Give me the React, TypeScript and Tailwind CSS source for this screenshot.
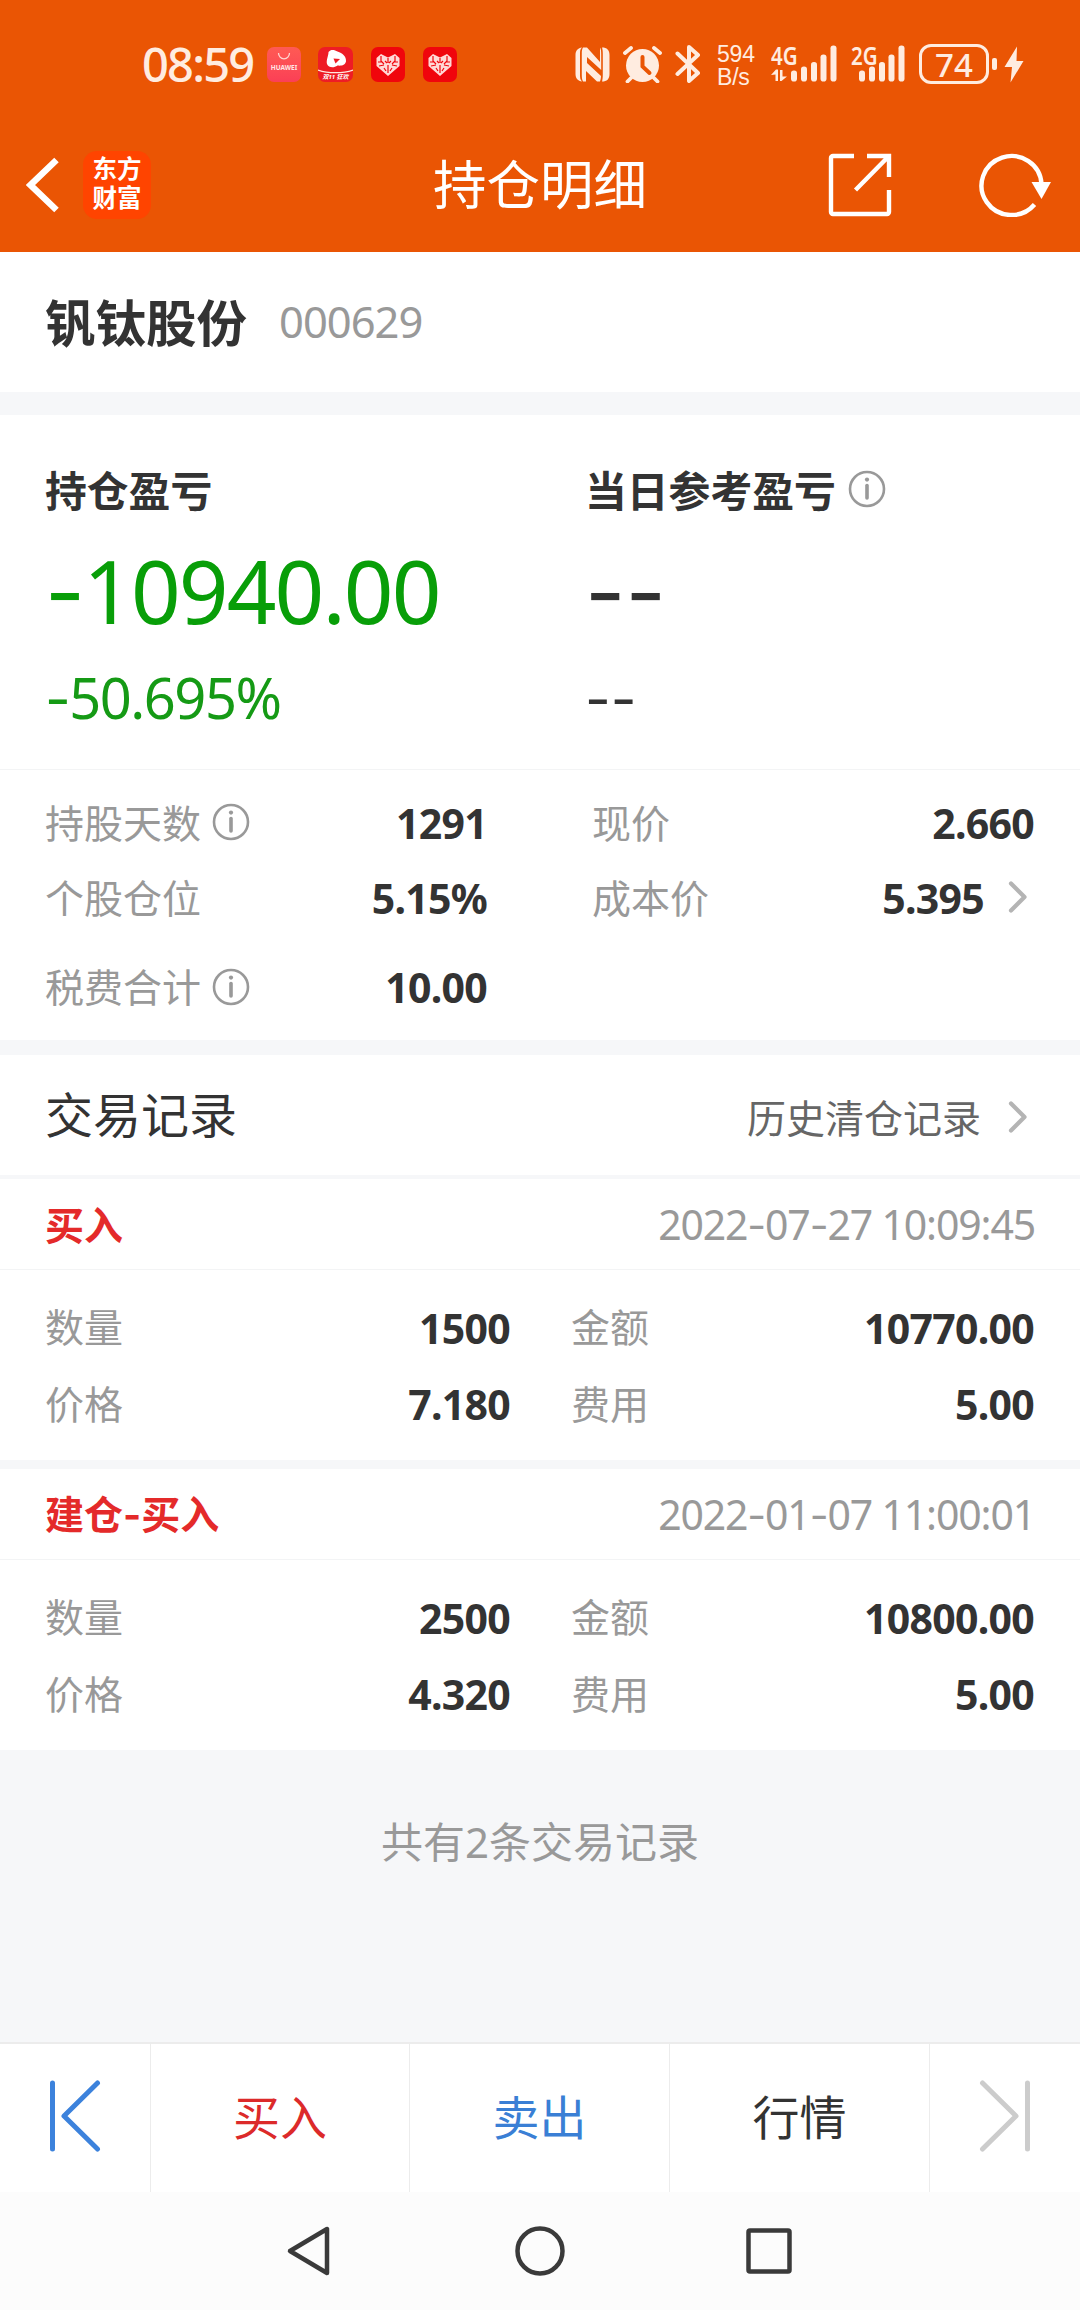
import React from 'react';

// Type definitions
interface TradeRecord {
  kind: string;
  time: string;
  quantity: string;
  amount: string;
  price: string;
  fee: string;
}

// Sample data
const records: TradeRecord[] = [
  {
    kind: '买入',
    time: '2022-07-27 10:09:45',
    quantity: '1500',
    amount: '10770.00',
    price: '7.180',
    fee: '5.00',
  },
  {
    kind: '建仓-买入',
    time: '2022-01-07 11:00:01',
    quantity: '2500',
    amount: '10800.00',
    price: '4.320',
    fee: '5.00',
  },
];

// Text with the wide hyphen of Inter in place of the short default one
const Dashed: React.FC<{ text: string }> = ({ text }) => (
  <>
    {text.split(/(-)/).map((part, i) =>
      part === '-' ? (
        <span key={i} className="font-['Inter']">-</span>
      ) : (
        <React.Fragment key={i}>{part}</React.Fragment>
      )
    )}
  </>
);

const InfoIcon: React.FC = () => (
  <svg className="h-[38px] w-[38px]" viewBox="0 0 38 38" fill="none">
    <circle cx="19" cy="19" r="17" stroke="#999999" strokeWidth="2.6" />
    <circle cx="19" cy="9.6" r="2.1" fill="#999999" />
    <path d="M19 15.5V28" stroke="#999999" strokeWidth="3.6" strokeLinecap="round" />
  </svg>
);

const Chevron: React.FC = () => (
  <svg className="h-8 w-5" viewBox="0 0 20 32" fill="none">
    <path d="M3 2.5L16.5 16L3 29.5" stroke="#b4b4b4" strokeWidth="4.2" strokeLinecap="round" strokeLinejoin="round" />
  </svg>
);

const Signal: React.FC<{ label: string; data?: boolean }> = ({ label, data }) => (
  <div className="relative h-[38px] w-[68px]">
    <span className="absolute -top-[1px] left-0 origin-left scale-x-[0.82] text-[25px] leading-[22px] font-semibold">{label}</span>
    <svg className="h-[38px] w-[68px]" viewBox="0 0 68 38" fill="currentColor">
      {data && <path d="M0 30l5-5.5h2V36H4.500V29.500zM9 25h2.500v6.500H16L10.500 36H9z" />}
      <rect x={data ? 20 : 8} y="25.500" width="6" height="11" rx="2.800" />
      <rect x={data ? 30 : 18} y="21.500" width="6" height="15" rx="2.800" />
      <rect x={data ? 40 : 28} y="17" width="6" height="19.500" rx="2.800" />
      <rect x={data ? 49.500 : 37.500} y="9.500" width="6" height="27" rx="2.800" />
      <rect x={data ? 59.500 : 47.500} y="0.500" width="6" height="36" rx="2.800" />
    </svg>
  </div>
);

// Heart shaped shopping logo
const HeartApp: React.FC = () => (
  <svg className="h-[35px] w-[34px]" viewBox="0 0 34 35">
    <rect width="34" height="35" rx="7" fill="#f0050c" />
    <path d="M5.500 11L10 7l7 3.500L24 7l4.500 4v8L17 29 5.500 19z" fill="#ffd9d6" />
    <path
      d="M17 11v5M10 9v5l3 3M24 9v5l-3 3M7 15h4M27 15h-4M8 19l5-1M26 19l-5-1M17 18v8M13 21l2 3M21 21l-2 3M14 14l2 2M20 14l-2 2"
      stroke="#f0050c"
      strokeWidth="1.200"
      fill="none"
    />
  </svg>
);

const StatusBar: React.FC = () => (
  <div className="flex h-[120px] items-center pt-2 text-[#ffece0]">
    <span className="ml-[142px] w-[125px] text-[47px] leading-none font-medium tracking-[-1.8px]">08:59</span>
    <div className="flex h-[35px] w-[34px] flex-col items-center rounded-[7px] bg-gradient-to-b from-[#ff5a54] to-[#fb3f56]">
      <svg className="mt-[5px] h-[9px] w-3.5" viewBox="0 0 14 9" fill="none">
        <path d="M1.500 1a5.500 5.800 0 0 0 11 0" stroke="#ffd5d0" strokeWidth="1.300" />
      </svg>
      <span className="mt-1 text-[6.500px] leading-none font-bold text-[#ffe6e4]">HUAWEI</span>
    </div>
    <div className="ml-[17px] flex h-[35px] w-[35px] flex-col items-center overflow-hidden rounded-[7px] bg-[#ee1c25]">
      <svg className="h-[27px] w-[35px] shrink-0" viewBox="0 0 35 27">
        <path d="M10.500 5c2-3 6-2.500 9-.5 5 1.500 9 5 8.500 10-1 4-5 4.500-8.500 4-4 3-9 2-10.500-1.500-1-4 1.500-8 1.500-12z" fill="#fff" />
        <path d="M15.500 11.500l6.500 .5-4.500 4.500z" fill="#ee1c25" />
        <path d="M0 23c10 3.500 25 3.500 35 0" stroke="#ffe8e0" strokeWidth="1.300" fill="none" />
      </svg>
      <span className="text-[6px] leading-[7px] font-bold text-white italic">双11 狂欢</span>
    </div>
    <div className="ml-[18px] flex gap-[18px]">
      <HeartApp />
      <HeartApp />
    </div>
    <div className="ml-[118px] flex items-center">
      <svg className="h-[35px] w-[35px]" viewBox="0 0 35 35">
        <path d="M7 .5C5 2 5 4 5 7v20.500c0 3 0 5 2 7C3 34 .5 31.500 .5 27V8C.5 3.500 3 1 7 .5zM27 .5c5 0 7.500 2.500 7.500 7.500v19c0 5-2.500 7.500-7.500 7.500.5-1.500.8-4 .8-7V7c0-3-.3-5-.8-6.500zM8 .5h4L25 15V.5c1 1.500 1.200 3.500 1.200 6.500v16L12 10v6l14 13c0 2-.5 4-1 5.500h-3L11 24v10.500H8c-1-2-1.200-4-1.200-7V7c0-3 .2-5 1.200-6.500z" fill="currentColor" />
      </svg>
      <svg className="ml-[13px] h-[37px] w-[39px]" viewBox="0 0 39 37" fill="none">
        <circle cx="19.500" cy="19.500" r="16.500" fill="currentColor" />
        <path d="M2 7l6-5M37 7l-6-5M8 32l-3.500 3.500M31 32l3.500 3.500" stroke="currentColor" strokeWidth="3.800" strokeLinecap="round" />
        <path d="M19.500 11v9.500l7 6.500" stroke="#ea5504" strokeWidth="4" strokeLinecap="round" />
      </svg>
      <svg className="ml-[13px] h-[38px] w-[26px]" viewBox="0 0 26 38" fill="none">
        <path d="M2.500 8.500L23 28l-9 8V2l9 8L2.500 29" stroke="currentColor" strokeWidth="4" strokeLinecap="round" strokeLinejoin="round" />
      </svg>
      <div className="mt-[3px] ml-4 w-[54px] font-['Liberation_Sans'] text-[23px] leading-[23px] tracking-[-0.200px]">
        594
        <br />
        B/s
      </div>
      <Signal label="4G" data />
      <div className="ml-3">
        <Signal label="2G" />
      </div>
      <div className="flex h-10 w-[70px] items-center justify-center rounded-[12px] border-[3px] border-current text-[33px] leading-none font-medium">
        74
      </div>
      <span className="ml-[3px] h-3 w-[5px] rounded-[2px] bg-current" />
      <svg className="ml-[7px] h-[37px] w-5" viewBox="0 0 20 37" fill="currentColor">
        <path d="M13 0.500L0.500 21H8L6.500 36.500L19.500 15H12.500z" />
      </svg>
    </div>
  </div>
);

const TitleBar: React.FC = () => (
  <div className="grid h-[132px] grid-cols-[380px_1fr_380px] items-center pb-[3px] text-white">
    <div className="flex items-center pl-[26px]">
      <svg className="h-14 w-[34px]" viewBox="0 0 34 56" fill="none">
        <path d="M30.500 3L4.500 28l26 25" stroke="currentColor" strokeWidth="6.500" />
      </svg>
      <div className="ml-[23px] flex h-[68px] w-[68px] flex-col items-center justify-center rounded-[14px] bg-[#ff4400] pb-[3px] text-[24.500px] leading-[29px] font-bold">
        <span>东方</span>
        <span>财富</span>
      </div>
    </div>
    <h1 className="pt-px text-center text-[53.500px] leading-none">持仓明细</h1>
    <div className="flex items-center justify-end pr-[28px]">
      <svg className="h-16 w-16" viewBox="0 0 64 64" fill="none" stroke="currentColor" strokeWidth="4.400">
        <path d="M26 3H5a2 2 0 0 0-2 2v54a2 2 0 0 0 2 2h54a2 2 0 0 0 2-2V37M39 3h22v21M60 4L27.500 37" />
      </svg>
      <svg className="ml-[87px] h-16 w-[73px]" viewBox="0 0 73 64" fill="none">
        <path d="M55.500 51.500A30 29.500 0 1 1 62.500 31" stroke="currentColor" strokeWidth="4.400" />
        <path d="M52.500 29h19.500L62.500 46z" fill="currentColor" />
      </svg>
    </div>
  </div>
);

const RecordCard: React.FC<{ record: TradeRecord }> = ({ record }) => {
  const cells = [
    ['数量', record.quantity, '金额', record.amount],
    ['价格', record.price, '费用', record.fee],
  ];

  return (
    <div className="bg-white">
      <div className="flex h-[91px] items-center justify-between border-b border-[#f3f4f5] pr-[45px] pl-[45px]">
        <span className="text-[39px] leading-none font-bold text-[#e42a2a]">
          <Dashed text={record.kind} />
        </span>
        <span className="pt-[2px] text-[41px] leading-none tracking-[-1.150px] text-[#999999]">
          <Dashed text={record.time} />
        </span>
      </div>
      <div className="pt-5 pb-[17px]">
        {cells.map(([labelA, valueA, labelB, valueB]) => (
          <div key={labelA} className="grid h-[76.500px] grid-cols-[465px_463px] items-center gap-[61px] pl-[45px] text-[39px] leading-none">
            <div className="flex items-center justify-between">
              <span className="pb-[3px] text-[#999999]">{labelA}</span>
              <span className="text-[41px] font-bold tracking-[-0.700px] text-[#333333]">{valueA}</span>
            </div>
            <div className="flex items-center justify-between">
              <span className="pb-[3px] text-[#999999]">{labelB}</span>
              <span className="text-[41px] font-bold tracking-[-0.700px] text-[#333333]">{valueB}</span>
            </div>
          </div>
        ))}
      </div>
    </div>
  );
};

const PositionDetail: React.FC = () => {
  const label = 'flex items-center gap-[11px] pb-[2px] text-[39px] text-[#999999]';
  const value = 'text-[41px] font-bold tracking-[-0.700px]';

  return (
    <div className="flex h-[2310px] w-[1080px] flex-col bg-[#f6f7f9] font-['Noto_Sans','Noto_Sans_CJK_SC',sans-serif] text-[#333333]">
      <header className="bg-[#ea5504]">
        <StatusBar />
        <TitleBar />
      </header>

      {/* Stock name */}
      <div className="flex h-[140px] items-center gap-[32px] bg-white pl-[45px] leading-none">
        <span className="pt-[2px] text-[50.500px] font-bold">钒钛股份</span>
        <span className="text-[43.500px] tracking-[-1px] text-[#999999]">000629</span>
      </div>

      {/* Profit and loss */}
      <div className="mt-[23px] grid h-[355px] grid-cols-[540px_1fr] border-b border-[#f3f4f5] bg-white pt-[25px] pl-[45px] leading-none">
        <div>
          <div className="flex h-[100px] items-center pt-[2px] text-[41.800px] font-bold">持仓盈亏</div>
          <div className="flex h-[102px] items-center text-[87px] tracking-[-1.900px] text-[#089e08]">
            <span><Dashed text="-10940.00" /></span>
          </div>
          <div className="flex h-[112px] items-center text-[56px] tracking-[-1.500px] text-[#159a15]">
            <span><Dashed text="-50.695%" /></span>
          </div>
        </div>
        <div>
          <div className="flex h-[100px] items-center gap-[12px] pt-[2px] text-[41.800px] font-bold">
            当日参考盈亏
            <span className="pb-1"><InfoIcon /></span>
          </div>
          <div className="flex h-[102px] items-center text-[88px]">
            <span><Dashed text="--" /></span>
          </div>
          <div className="flex h-[112px] items-center text-[56px]">
            <span><Dashed text="--" /></span>
          </div>
        </div>
      </div>

      {/* Position figures */}
      <div className="grid h-[270px] grid-cols-[442px_442px] grid-rows-[76px_74px_105px] items-center gap-x-[105px] bg-white pt-[15px] pl-[45px] leading-none">
        <div className="flex items-center justify-between">
          <span className={label}>持股天数<InfoIcon /></span>
          <span className={value}>1291</span>
        </div>
        <div className="flex items-center justify-between">
          <span className={label}>现价</span>
          <span className={value}>2.660</span>
        </div>
        <div className="flex items-center justify-between">
          <span className={label}>个股仓位</span>
          <span className={value}>5.15%</span>
        </div>
        <div className="flex items-center">
          <span className={label}>成本价</span>
          <span className="ml-auto text-[41px] font-bold tracking-[-0.700px]">5.395</span>
          <span className="mr-[6px] ml-6 pb-[2px]"><Chevron /></span>
        </div>
        <div className="flex items-center justify-between">
          <span className={label}>税费合计<InfoIcon /></span>
          <span className={value}>10.00</span>
        </div>
      </div>

      {/* Trade records */}
      <div className="mt-[15px] flex h-[120px] items-center bg-white pr-[52px] pl-[45px] leading-none">
        <span className="text-[48px]">交易记录</span>
        <span className="mt-1 mr-[27px] ml-auto text-[39px] text-[#666666]">历史清仓记录</span>
        <span className="pt-[3px]"><Chevron /></span>
      </div>
      <div className="mt-1 flex flex-col gap-[9px]">
        {records.map((record) => (
          <RecordCard key={record.time} record={record} />
        ))}
      </div>
      <div className="flex-1 pt-[71px] text-center text-[42px] leading-none text-[#999999]">共有2条交易记录</div>

      {/* Action bar */}
      <div className="grid h-[150px] grid-cols-[151px_259px_260px_260px_150px] divide-x divide-[#ececec] border-t-2 border-[#ececec] bg-white text-[47px] leading-none">
        <button className="flex items-center justify-center pb-1">
          <svg className="h-[72px] w-[52px]" viewBox="0 0 52 72" fill="none" stroke="#3c82dc" strokeWidth="5" strokeLinecap="round" strokeLinejoin="round">
            <path d="M3.500 3v66M48.500 3L15 36l33.500 33" />
          </svg>
        </button>
        <button className="pb-px text-[#dc2a2a]">买入</button>
        <button className="pb-px text-[#3a7fd5]">卖出</button>
        <button className="pb-px text-[#333333]">行情</button>
        <button className="flex items-center justify-center pb-1">
          <svg className="h-[72px] w-[52px]" viewBox="0 0 52 72" fill="none" stroke="#cccccc" strokeWidth="5" strokeLinecap="round" strokeLinejoin="round">
            <path d="M48.500 3v66M3.500 3L37 36L3.500 69" />
          </svg>
        </button>
      </div>

      {/* System navigation */}
      <div className="flex h-[118px] items-center bg-[#fcfcfc] pl-[285px]">
        <svg className="h-[52px] w-[46px]" viewBox="0 0 46 52" fill="none" stroke="#3a3a3a" strokeWidth="4.500" strokeLinejoin="round">
          <path d="M42 4v44L5 26z" />
        </svg>
        <svg className="ml-[183px] h-[52px] w-[52px]" viewBox="0 0 52 52" fill="none" stroke="#3a3a3a" strokeWidth="4.500">
          <circle cx="26" cy="26" r="22.500" />
        </svg>
        <svg className="ml-[179px] h-12 w-12" viewBox="0 0 48 48" fill="none" stroke="#3a3a3a" strokeWidth="4.500" strokeLinejoin="round">
          <rect x="3.500" y="3.500" width="41" height="41" rx="1.500" />
        </svg>
      </div>
    </div>
  );
};

export default PositionDetail;
